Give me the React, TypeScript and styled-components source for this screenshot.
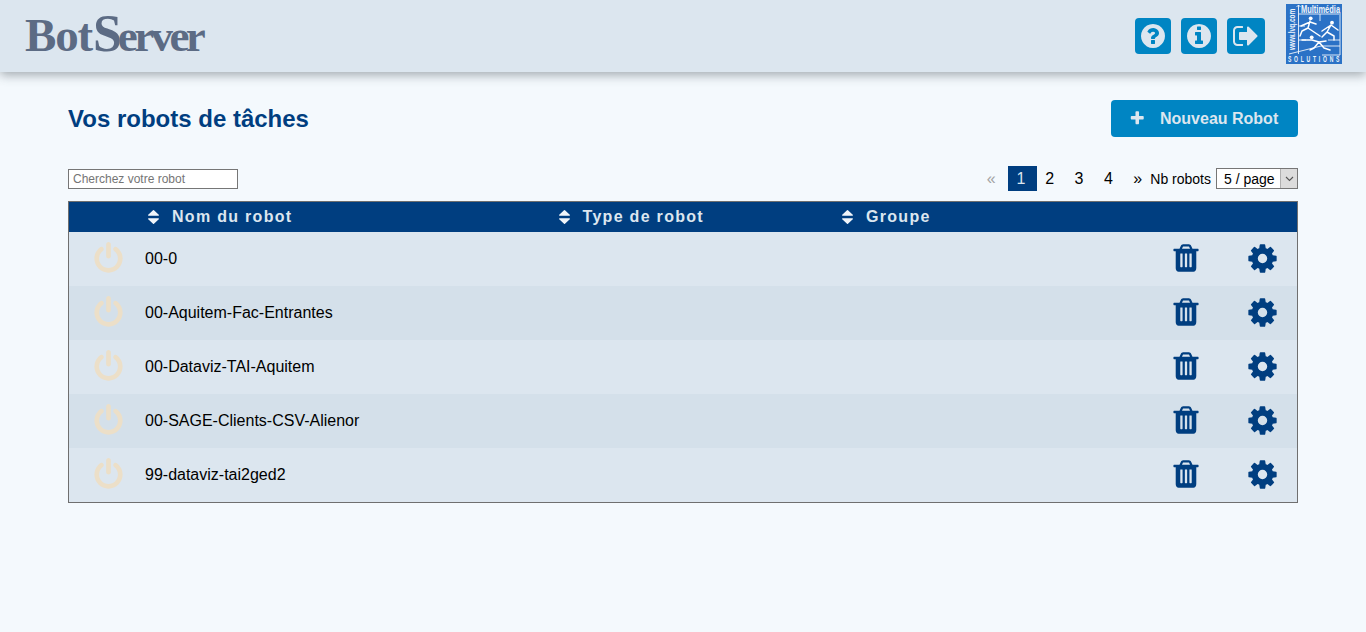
import React from "react";
import styled, { createGlobalStyle } from "styled-components";

const Global = createGlobalStyle`
  html, body { margin: 0; padding: 0; height: 100%; }
  body { background: #f4f9fd; font-family: "Liberation Sans", Arial, sans-serif; color: #000; overflow: hidden; }
`;

const paths = {
  question:
    "M1024 1376v-192q0-14-9-23t-23-9h-192q-14 0-23 9t-9 23v192q0 14 9 23t23 9h192q14 0 23-9t9-23zm256-672q0-88-55.5-163t-138.5-116-170-41q-243 0-371 213-15 24 8 42l132 100q7 6 19 6 16 0 25-12 53-68 86-92 34-24 86-24 48 0 85.5 26t37.5 59q0 38-20 61t-68 45q-63 28-115.5 86.5t-52.5 125.5v36q0 14 9 23t23 9h192q14 0 23-9t9-23q0-19 21.5-49.5t54.5-49.5q32-18 49-28.5t46-35 44.5-48 28-60.5 12.5-81zm384 192q0 209-103 385.5t-279.5 279.5-385.5 103-385.5-103-279.5-279.5-103-385.5 103-385.5 279.5-279.5 385.5-103 385.5 103 279.5 279.5 103 385.5z",
  info:
    "M1152 1376v-160q0-14-9-23t-23-9h-96v-512q0-14-9-23t-23-9h-320q-14 0-23 9t-9 23v160q0 14 9 23t23 9h96v320h-96q-14 0-23 9t-9 23v160q0 14 9 23t23 9h448q14 0 23-9t9-23zm-128-896v-160q0-14-9-23t-23-9h-192q-14 0-23 9t-9 23v160q0 14 9 23t23 9h192q14 0 23-9t9-23zm640 416q0 209-103 385.5t-279.5 279.5-385.5 103-385.5-103-279.5-279.5-103-385.5 103-385.5 279.5-279.5 385.5-103 385.5 103 279.5 279.5 103 385.5z",
  signOut:
    "M704 1440q0 4 1 20t.5 26.5-3 23.5-10 19.5-20.5 6.5h-320q-119 0-203.5-84.5t-84.5-203.5v-704q0-119 84.5-203.5t203.5-84.5h320q13 0 22.5 9.5t9.5 22.5q0 4 1 20t.5 26.5-3 23.5-10 19.5-20.5 6.5h-320q-66 0-113 47t-47 113v704q0 66 47 113t113 47h312l11.5 1 11.5 3 8 5.5 7 9 2 13.5zm928-544q0 26-19 45l-544 544q-19 19-45 19t-45-19-19-45v-288h-448q-26 0-45-19t-19-45v-384q0-26 19-45t45-19h448v-288q0-26 19-45t45-19 45 19l544 544q19 19 19 45z",
  plus:
    "M1600 736v192q0 40-28 68t-68 28h-416v416q0 40-28 68t-68 28h-192q-40 0-68-28t-28-68v-416h-416q-40 0-68-28t-28-68v-192q0-40 28-68t68-28h416v-416q0-40 28-68t68-28h192q40 0 68 28t28 68v416h416q40 0 68 28t28 68z",
  sort:
    "M1408 1088q0 26-19 45l-448 448q-19 19-45 19t-45-19l-448-448q-19-19-19-45t19-45 45-19h896q26 0 45 19t19 45zm0-384q0 26-19 45t-45 19h-896q-26 0-45-19t-19-45 19-45l448-448q19-19 45-19t45 19l448 448q19 19 19 45z",
  power:
    "M1664 896q0 156-61 298t-164 245-245 164-298 61-298-61-245-164-164-245-61-298q0-182 80.5-343t226.5-270q43-32 95.5-25t83.5 50q32 42 24.5 94.5t-49.5 84.5q-98 74-151.5 181t-53.5 228q0 104 40.5 198.5t109.5 163.5 163.5 109.5 198.5 40.5 198.5-40.5 163.5-109.5 109.5-163.5 40.5-198.5q0-121-53.5-228t-151.5-181q-42-32-49.5-84.5t24.5-94.5q31-43 84-50t95 25q146 109 226.5 270t80.5 343zm-640-768v640q0 52-38 90t-90 38-90-38-38-90v-640q0-52 38-90t90-38 90 38 38 90z",
  trash:
    "M704 1376v-704q0-14-9-23t-23-9h-64q-14 0-23 9t-9 23v704q0 14 9 23t23 9h64q14 0 23-9t9-23zm256 0v-704q0-14-9-23t-23-9h-64q-14 0-23 9t-9 23v704q0 14 9 23t23 9h64q14 0 23-9t9-23zm256 0v-704q0-14-9-23t-23-9h-64q-14 0-23 9t-9 23v704q0 14 9 23t23 9h64q14 0 23-9t9-23zm-544-992h448l-48-117q-7-9-17-11h-317q-10 2-17 11zm928 32v64q0 14-9 23t-23 9h-96v948q0 83-47 143.5t-113 60.5h-832q-66 0-113-58.5t-47-141.5v-952h-96q-14 0-23-9t-9-23v-64q0-14 9-23t23-9h309l70-167q15-37 54-63t79-26h320q40 0 79 26t54 63l70 167h309q14 0 23 9t9 23z",
  cog:
    "M1152 896q0-106-75-181t-181-75-181 75-75 181 75 181 181 75 181-75 75-181zm512-109v222q0 12-8 23t-20 13l-185 28q-19 54-39 91 35 50 107 138 10 12 10 25t-9 23q-27 37-99 108t-94 71q-12 0-26-9l-138-108q-44 23-91 38-16 136-29 186-7 28-36 28h-222q-14 0-24.5-8.5t-11.5-21.5l-28-184q-49-16-90-37l-141 107q-10 9-25 9-14 0-25-11-126-114-165-168-7-10-7-23 0-12 8-23 15-21 51-66.5t54-70.5q-27-50-41-99l-183-27q-13-2-21-12.5t-8-23.5v-222q0-12 8-23t19-13l186-28q14-46 39-92-40-57-107-138-10-12-10-24 0-10 9-23 26-36 98.5-107.5t94.5-71.5q13 0 26 10l138 107q44-23 91-38 16-136 29-186 7-28 36-28h222q14 0 24.5 8.5t11.5 21.5l28 184q49 16 90 37l142-107q9-9 24-9 13 0 25 10 129 119 165 170 7 8 7 22 0 12-8 23-15 21-51 66.5t-54 70.5q26 50 41 98l183 28q13 2 21 12.5t8 23.5z",
};

const Glyph = ({ name, className }: { name: keyof typeof paths; className?: string }) => (
  <svg className={className} viewBox="0 0 1792 1792" aria-hidden="true">
    <path d={paths[name]} fill="currentColor" fillRule="evenodd" />
  </svg>
);

const Page = styled.div`
  min-height: 632px;
  background: #f4f9fd;
`;

const TopBar = styled.header`
  height: 72px;
  background: #dce6ef;
  box-shadow: 0 3px 10px rgba(60, 70, 80, 0.45);
  display: flex;
  align-items: center;
  justify-content: space-between;
  padding: 0 24px 0 25px;
`;

const Brand = styled.div`
  font-family: "Liberation Serif", serif;
  font-weight: bold;
  color: #5c6b84;
  font-size: 47px;
  line-height: 48px;
  display: flex;
  align-items: baseline;
  margin-top: -2px;
`;

const BrandBot = styled.span`
  letter-spacing: -1.2px;
`;

const BrandCap = styled.span`
  font-size: 52px;
  letter-spacing: -4px;
  margin-left: 1px;
`;

const BrandRest = styled.span`
  font-size: 45px;
  letter-spacing: -3.6px;
`;

const TopActions = styled.div`
  display: flex;
  align-items: center;
`;

const IconButton = styled.button<{ $w?: number }>`
  width: ${(p) => p.$w ?? 36}px;
  height: 36px;
  margin-right: 10px;
  border: 0;
  padding: 0;
  border-radius: 4px;
  background: #0085c3;
  color: #dce6ef;
  display: flex;
  align-items: center;
  justify-content: center;
  &:last-of-type { margin-right: 21px; }
`;

const ToolGlyph = styled(Glyph)`
  width: 28px;
  height: 28px;
`;

const Main = styled.main`
  margin: 0 68px;
`;

const TitleRow = styled.div`
  display: flex;
  align-items: center;
  justify-content: space-between;
  padding-top: 28px;
  height: 37px;
`;

const Title = styled.h1`
  margin: 0;
  font-size: 24px;
  font-weight: bold;
  color: #003e80;
`;

const NewButton = styled.button`
  width: 187px;
  height: 37px;
  border: 0;
  border-radius: 4px;
  background: #0085c3;
  color: #dce6ef;
  font: bold 16px "Liberation Sans", Arial, sans-serif;
  display: flex;
  align-items: center;
  padding: 0 0 0 18px;
  gap: 14.5px;
`;

const PlusGlyph = styled(Glyph)`
  width: 16.5px;
  height: 16.5px;
`;

const Toolbar = styled.div`
  display: flex;
  align-items: center;
  justify-content: space-between;
  margin-top: 29px;
  height: 25px;
`;

const Search = styled.input`
  box-sizing: border-box;
  width: 170px;
  height: 20px;
  border: 1px solid #767676;
  background: #fff;
  padding: 0 4px;
  font: 12px "Liberation Sans", Arial, sans-serif;
  outline: none;
  &::placeholder { color: #757575; opacity: 1; }
`;

const Pager = styled.div`
  display: flex;
  align-items: center;
  font-size: 14px;
`;

const PageLink = styled.span<{ $active?: boolean; $muted?: boolean }>`
  box-sizing: border-box;
  width: 29.3px;
  height: 25px;
  display: flex;
  align-items: center;
  justify-content: center;
  font-size: 16px;
  background: ${(p) => (p.$active ? "#003e80" : "transparent")};
  color: ${(p) => (p.$active ? "#dce6ef" : p.$muted ? "#a3a3a3" : "#000")};
  ${(p) => (p.$active ? "margin: 0 -2px 0 2px; padding-right: 3px;" : "")}
`;

const PerPageLabel = styled.span`
  margin-left: -2px;
  margin-right: 5px;
`;

const PerPage = styled.div`
  box-sizing: border-box;
  width: 82px;
  height: 21px;
  border: 1px solid #767676;
  background: #fff;
  display: flex;
  align-items: center;
  justify-content: space-between;
  padding-left: 7px;
  font-size: 14px;
`;

const PerPageArrow = styled.span`
  width: 17px;
  height: 19px;
  background: #dcdcdc;
  border-left: 1px solid #b0b0b0;
  display: flex;
  align-items: center;
  justify-content: center;
  box-sizing: border-box;
`;

const Table = styled.div`
  margin-top: 10px;
  border: 1px solid #6f6f6f;
  box-sizing: border-box;
  height: 302px;
`;

const RowGrid = styled.div`
  display: grid;
  grid-template-columns: 76px 410.5px 283.5px 1fr 76px 70px;
  align-items: center;
`;

const HeadRow = styled(RowGrid)`
  height: 30px;
  background: #003e80;
  color: #dce6ef;
  font-weight: bold;
  font-size: 16px;
  letter-spacing: 1.3px;
`;

const HeadCell = styled.div`
  display: flex;
  align-items: center;
  padding-left: 3px;
  gap: 13px;
`;

const SortSvg = styled.svg`
  width: 11px;
  height: 14px;
  flex: none;
  color: #f0f5fa;
`;

const SortIcon = () => (
  <SortSvg viewBox="384 192 1024 1408" preserveAspectRatio="none" aria-hidden="true">
    <path d={paths.sort} fill="currentColor" />
  </SortSvg>
);

const BodyRow = styled(RowGrid)<{ $alt?: boolean }>`
  height: 54px;
  background: ${(p) => (p.$alt ? "#d4e0ea" : "#dce6ef")};
  font-size: 16px;
`;

const Cell = styled.div<{ $center?: boolean }>`
  display: flex;
  align-items: center;
  justify-content: ${(p) => (p.$center ? "center" : "flex-start")};
`;

const PowerIcon = styled(Glyph)`
  width: 33px;
  height: 33px;
  color: #ecdfc8;
  margin: 0 0 2px 2px;
`;

const TrashIcon = styled(Glyph)`
  width: 32px;
  height: 32px;
  color: #003e80;
  margin: 0 6px 2px 0;
`;

const GearIcon = styled(Glyph)`
  width: 33px;
  height: 33px;
  color: #003e80;
  margin-bottom: 2px;
`;

const LogoSvg = styled.svg`
  width: 56px;
  height: 60px;
  margin-top: -4px;
`;

const logoWhite = "#eef4fb";
const logoFont = "Liberation Sans, sans-serif";

const LvqLogo = () => (
  <LogoSvg viewBox="0 0 56 60" aria-label="Multimédia Solutions">
    <rect width="56" height="60" fill="#2b72c6" />
    <text transform="translate(15 9) scale(0.72 1)" fontFamily={logoFont} fontWeight="bold" fontSize="10.4" fill={logoWhite}>Multimédia</text>
    <text transform="translate(2 58) scale(0.6 1)" fontFamily={logoFont} fontWeight="bold" fontSize="8.4" letterSpacing="4.6" fill={logoWhite}>SOLUTIONS</text>
    <text transform="translate(8.5 46) rotate(-90) scale(0.68 1)" fontFamily={logoFont} fontWeight="bold" fontSize="9.6" fill={logoWhite}>www.lvq.com</text>
    <g fill="none" stroke={logoWhite} strokeWidth="0.9">
      <path d="M12.5 1V50M10.5 3 12.5 1 14.5 3M12.5 10H55M12.5 22H19M12.5 36H20" />
      <path d="M3 50 35 42 54 42M54 11V51H36" />
      <path d="M34 10V17M42 36 54 36" />
    </g>
    <g fill="none" stroke="#fff" strokeWidth="1.5" strokeLinecap="round" strokeLinejoin="round">
      <path d="M15 22 24 18 30 20M24 17 22 24 28 28 34 32M22 24 16 27 14 32" />
      <path d="M36 27 45 21 52 26M45 21 41 28 48 32 48 36M41 28 36 33" />
      <path d="M16 36 26 36 33 38 40 37M33 38 38 44 44 46M33 38 28 44 24 46" />
    </g>
    <g fill="#fff">
      <circle cx="24.7" cy="14.3" r="1.9" />
      <circle cx="46" cy="18.7" r="1.9" />
      <circle cx="25.7" cy="33.3" r="1.9" />
    </g>
  </LogoSvg>
);

const robots = [
  "00-0",
  "00-Aquitem-Fac-Entrantes",
  "00-Dataviz-TAI-Aquitem",
  "00-SAGE-Clients-CSV-Alienor",
  "99-dataviz-tai2ged2",
];

export default function App() {
  return (
    <Page>
      <Global />
      <TopBar>
        <Brand>
          <BrandBot>Bot</BrandBot>
          <BrandCap>S</BrandCap>
          <BrandRest>erver</BrandRest>
        </Brand>
        <TopActions>
          <IconButton><ToolGlyph name="question" /></IconButton>
          <IconButton><ToolGlyph name="info" /></IconButton>
          <IconButton $w={38}><ToolGlyph name="signOut" /></IconButton>
          <LvqLogo />
        </TopActions>
      </TopBar>
      <Main>
        <TitleRow>
          <Title>Vos robots de tâches</Title>
          <NewButton><PlusGlyph name="plus" />Nouveau Robot</NewButton>
        </TitleRow>
        <Toolbar>
          <Search placeholder="Cherchez votre robot" />
          <Pager>
            <PageLink $muted>«</PageLink>
            <PageLink $active>1</PageLink>
            <PageLink>2</PageLink>
            <PageLink>3</PageLink>
            <PageLink>4</PageLink>
            <PageLink>»</PageLink>
            <PerPageLabel>Nb robots</PerPageLabel>
            <PerPage>
              5 / page
              <PerPageArrow>
                <svg width="9" height="6" viewBox="0 0 9 6"><path d="M1 1l3.5 3.5L8 1" fill="none" stroke="#555" strokeWidth="1.1" /></svg>
              </PerPageArrow>
            </PerPage>
          </Pager>
        </Toolbar>
        <Table>
          <HeadRow>
            <div />
            <HeadCell><SortIcon />Nom du robot</HeadCell>
            <HeadCell><SortIcon />Type de robot</HeadCell>
            <HeadCell><SortIcon />Groupe</HeadCell>
          </HeadRow>
          {robots.map((name, i) => (
            <BodyRow key={name} $alt={i % 2 === 1}>
              <Cell $center><PowerIcon name="power" /></Cell>
              <Cell>{name}</Cell>
              <Cell />
              <Cell />
              <Cell $center><TrashIcon name="trash" /></Cell>
              <Cell $center><GearIcon name="cog" /></Cell>
            </BodyRow>
          ))}
        </Table>
      </Main>
    </Page>
  );
}
